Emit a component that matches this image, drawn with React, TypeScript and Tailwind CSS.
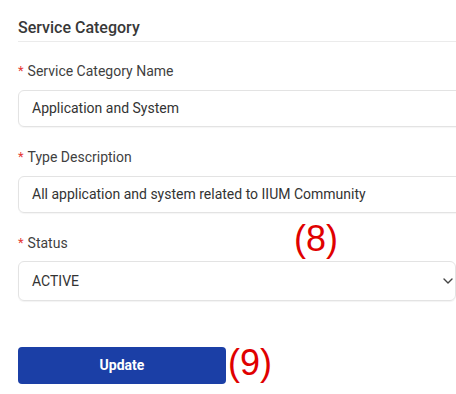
import React from "react";

function Label({ text }: { text: string }) {
  return (
    <div className="flex items-center h-5 text-[14px] text-[#3f3f3f]">
      <span className="text-[#e53935] mr-[4px] text-[13px]">*</span>
      <span>{text}</span>
    </div>
  );
}

export default function App() {
  return (
    <div
      className="relative w-[456px] h-[394px] overflow-hidden bg-white"
      style={{ fontFamily: "Roboto, 'Liberation Sans', sans-serif" }}
    >
      <div className="pl-[18px] w-[480px]">
        <div className="pt-[16px] pb-[1px] h-[42px] border-b border-[#ebebeb] text-[16px] leading-6 font-medium text-[#383838]">
          Service Category
        </div>
        <div className="pt-[19px]">
          <Label text="Service Category Name" />
          <div className="mt-[9px] h-[37px] flex items-center pl-[13px] border border-[#e3e3e3] rounded-[6px] shadow-[0_1px_1px_rgba(0,0,0,0.04)] text-[14px] text-[#333]">
            Application and System
          </div>
          <div className="mt-[20px]">
            <Label text="Type Description" />
          </div>
          <div className="mt-[9px] h-[37px] flex items-center pl-[13px] border border-[#e3e3e3] rounded-[6px] shadow-[0_1px_1px_rgba(0,0,0,0.04)] text-[14px] text-[#333]">
            All application and system related to IIUM Community
          </div>
          <div className="mt-[20px]">
            <Label text="Status" />
          </div>
          <div className="mt-[8px] h-[40px] w-[438px] flex items-center justify-between pl-[13px] pr-[2px] border border-[#e3e3e3] rounded-[6px] shadow-[0_1px_1px_rgba(0,0,0,0.05)] text-[14px] text-[#333]">
            <span>ACTIVE</span>
            <svg width="10" height="6" viewBox="0 0 10 6">
              <path d="M1 1 L5 5 L9 1" fill="none" stroke="#444" strokeWidth="1.4" strokeLinecap="round" strokeLinejoin="round" />
            </svg>
          </div>
          <div className="mt-[46px] flex items-center">
            <button className="w-[208px] h-[37px] rounded-[4px] bg-[#1b3fa6] text-white text-[14px] font-bold">
              Update
            </button>
          </div>
        </div>
      </div>
      <div
        className="absolute left-[294px] top-[217px] text-[36px] leading-[44px] text-[#e00000]"
        style={{ fontFamily: "'Liberation Sans', sans-serif" }}
      >
        (8)
      </div>
      <div
        className="absolute left-[228px] top-[341px] text-[36px] leading-[44px] text-[#e00000]"
        style={{ fontFamily: "'Liberation Sans', sans-serif" }}
      >
        (9)
      </div>
    </div>
  );
}
